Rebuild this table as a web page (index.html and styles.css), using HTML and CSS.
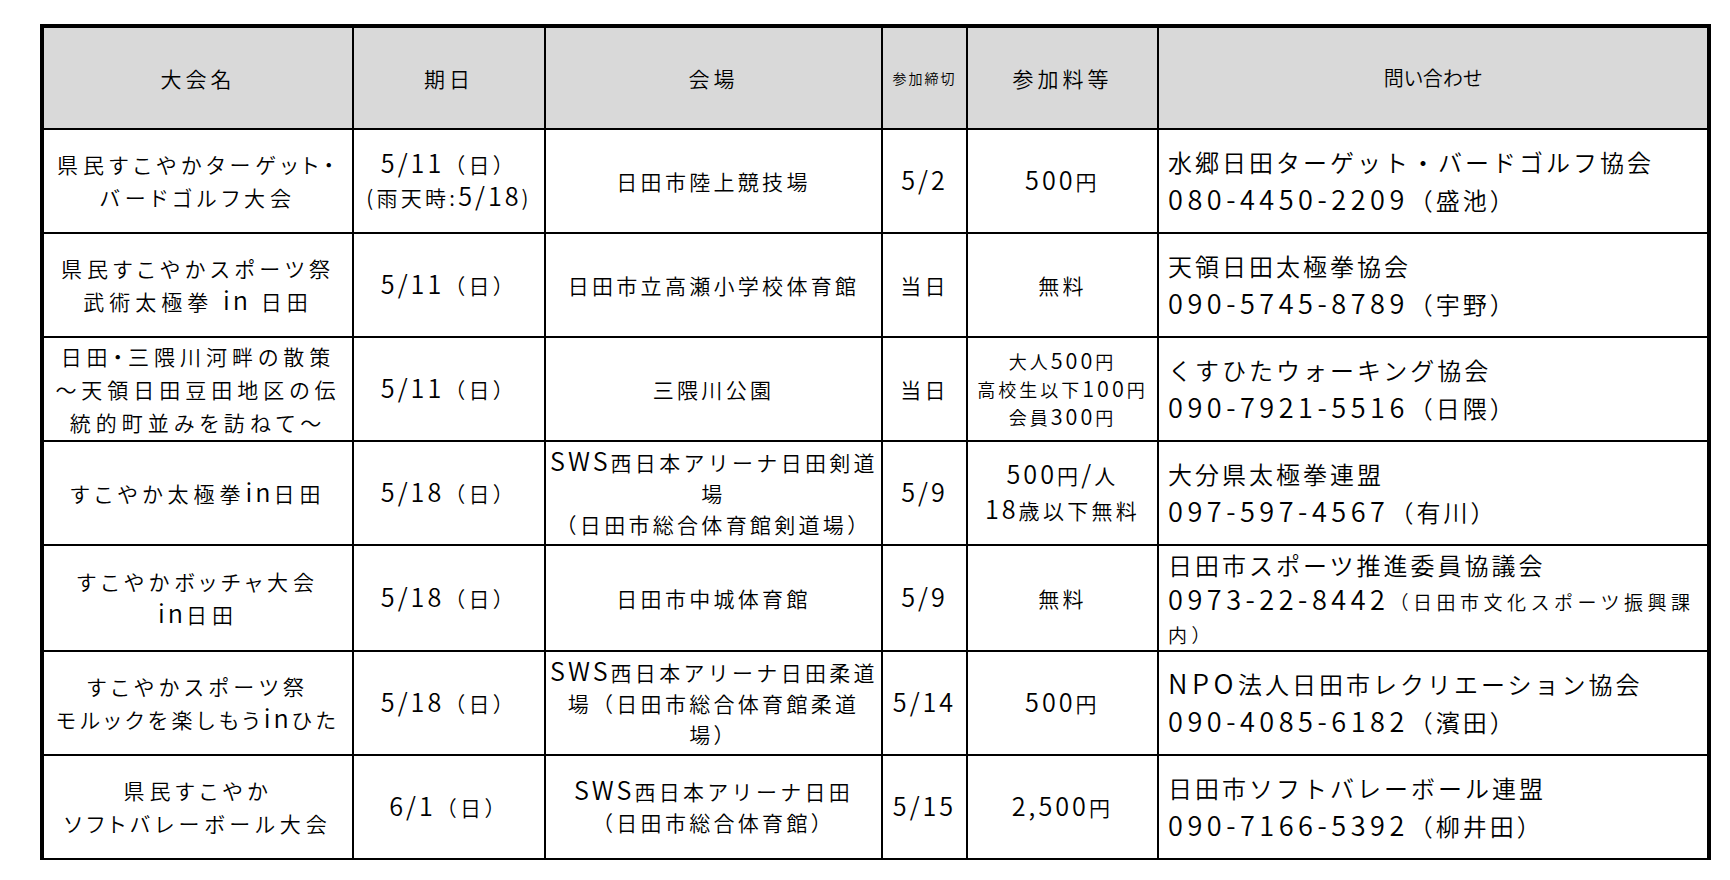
FILE: index.html
```html
<!DOCTYPE html>
<html lang="ja">
<head>
<meta charset="utf-8">
<title>大会一覧</title>
<link rel="stylesheet" href="styles.css">
</head>
<body>
<table class="events">
  <colgroup>
    <col class="c-name"><col class="c-date"><col class="c-venue"><col class="c-due"><col class="c-fee"><col class="c-contact">
  </colgroup>
  <thead>
    <tr>
      <th>大会名</th>
      <th>期日</th>
      <th>会場</th>
      <th class="due-h">参加締切</th>
      <th>参加料等</th>
      <th class="ask">問い合わせ</th>
    </tr>
  </thead>
  <tbody>
    <tr>
      <td class="name">県民すこやかターゲット・<br>バードゴルフ大会</td>
      <td class="date"><span class="n">5/11</span>（日）<br>(雨天時:<span class="n">5/18</span>)</td>
      <td class="venue">日田市陸上競技場</td>
      <td class="due"><span class="n">5/2</span></td>
      <td class="fee"><span class="n">500</span>円</td>
      <td class="contact"><div class="org">水郷日田ターゲット・バードゴルフ協会</div><div class="tel"><span class="n">080-4450-2209</span>（盛池）</div></td>
    </tr>
    <tr>
      <td class="name">県民すこやかスポーツ祭<br>武術太極拳&nbsp;<span class="n">in</span>&nbsp;日田</td>
      <td class="date"><span class="n">5/11</span>（日）</td>
      <td class="venue">日田市立高瀬小学校体育館</td>
      <td class="due">当日</td>
      <td class="fee">無料</td>
      <td class="contact"><div class="org">天領日田太極拳協会</div><div class="tel"><span class="n">090-5745-8789</span>（宇野）</div></td>
    </tr>
    <tr>
      <td class="name">日田・三隈川河畔の散策<br>～天領日田豆田地区の伝<br>統的町並みを訪ねて～</td>
      <td class="date"><span class="n">5/11</span>（日）</td>
      <td class="venue">三隈川公園</td>
      <td class="due">当日</td>
      <td class="fee fee-s">大人<span class="n">500</span>円<br>高校生以下<span class="n">100</span>円<br>会員<span class="n">300</span>円</td>
      <td class="contact"><div class="org">くすひたウォーキング協会</div><div class="tel"><span class="n">090-7921-5516</span>（日隈）</div></td>
    </tr>
    <tr>
      <td class="name">すこやか太極拳<span class="n">in</span>日田</td>
      <td class="date"><span class="n">5/18</span>（日）</td>
      <td class="venue"><span class="n">SWS</span>西日本アリーナ日田剣道<br>場<br>（日田市総合体育館剣道場）</td>
      <td class="due"><span class="n">5/9</span></td>
      <td class="fee"><span class="n">500</span>円<span class="n">/</span>人<br><span class="n">18</span>歳以下無料</td>
      <td class="contact"><div class="org">大分県太極拳連盟</div><div class="tel"><span class="n">097-597-4567</span>（有川）</div></td>
    </tr>
    <tr>
      <td class="name">すこやかボッチャ大会<br><span class="n">in</span>日田</td>
      <td class="date"><span class="n">5/18</span>（日）</td>
      <td class="venue">日田市中城体育館</td>
      <td class="due"><span class="n">5/9</span></td>
      <td class="fee">無料</td>
      <td class="contact"><div class="org">日田市スポーツ推進委員協議会</div><div class="tel tight"><span class="n">0973-22-8442</span><span class="small">（日田市文化スポーツ振興課<br>内）</span></div></td>
    </tr>
    <tr>
      <td class="name">すこやかスポーツ祭<br><span class="tighter">モルックを楽しもう<span class="n">in</span>ひた</span></td>
      <td class="date"><span class="n">5/18</span>（日）</td>
      <td class="venue"><span class="n">SWS</span>西日本アリーナ日田柔道<br>場（日田市総合体育館柔道<br>場）</td>
      <td class="due"><span class="n">5/14</span></td>
      <td class="fee"><span class="n">500</span>円</td>
      <td class="contact"><div class="org"><span class="n">NPO</span>法人日田市レクリエーション協会</div><div class="tel"><span class="n">090-4085-6182</span>（濱田）</div></td>
    </tr>
    <tr>
      <td class="name">県民すこやか<br>ソフトバレーボール大会</td>
      <td class="date"><span class="n">6/1</span>（日）</td>
      <td class="venue"><span class="n">SWS</span>西日本アリーナ日田<br>（日田市総合体育館）</td>
      <td class="due"><span class="n">5/15</span></td>
      <td class="fee"><span class="n">2,500</span>円</td>
      <td class="contact"><div class="org">日田市ソフトバレーボール連盟</div><div class="tel"><span class="n">090-7166-5392</span>（柳井田）</div></td>
    </tr>
  </tbody>
</table>
</body>
</html>
```

FILE: styles.css
```css
html, body {
  margin: 0;
  padding: 0;
  background: #fff;
}

body {
  font-family: "Noto Sans CJK JP", "Noto Sans", sans-serif;
  font-weight: 350;
  color: #000;
}

.events {
  margin: 24px 0 0 40px;
  width: 1671px;
  table-layout: fixed;
  border-collapse: separate;
  border-spacing: 0;
  border: 4px solid #000;
  border-bottom: 0;
}

.c-name { width: 310px; }
.c-date { width: 192px; }
.c-venue { width: 337px; }
.c-due { width: 85px; }
.c-fee { width: 191px; }
.c-contact { width: 548px; }

.events th,
.events td {
  border-right: 2px solid #000;
  border-bottom: 2px solid #000;
  padding: 0 4px;
  text-align: center;
  vertical-align: middle;
  white-space: nowrap;
  font-weight: 350;
}

.events th:last-child,
.events td:last-child {
  border-right: 0;
}

.events thead tr { height: 102px; }
.events tbody tr { height: 104px; }

.events th {
  background: #d9d9d9;
  font-size: 21px;
  letter-spacing: 4px;
  line-height: 24px;
}

.events th.due-h {
  font-size: 14px;
  letter-spacing: 2px;
  padding: 0;
}

.events th.ask {
  font-size: 20px;
  letter-spacing: 0;
  font-feature-settings: "palt";
}

.events td {
  font-size: 21px;
  letter-spacing: 3.3px;
  line-height: 33px;
}

.events td.name {
  letter-spacing: 5px;
  font-feature-settings: "palt";
}

.events td.name .tighter {
  letter-spacing: 4.2px;
}

.n {
  font-size: 1.2em;
  letter-spacing: 3px;
  line-height: 0;
}

.events td.venue { line-height: 31px; }
.events td.fee { line-height: 35px; }

.events td.fee-s {
  font-size: 18px;
  letter-spacing: 3px;
  line-height: 28px;
}

.events td.contact {
  text-align: left;
  padding-left: 9px;
  font-size: 24px;
  letter-spacing: 3px;
  line-height: 38px;
}

.contact .n {
  font-size: 1.13em;
  letter-spacing: 4.5px;
}

.contact .small {
  font-size: 19px;
  letter-spacing: 4.5px;
}

.contact .tight { line-height: 31px; }
```
